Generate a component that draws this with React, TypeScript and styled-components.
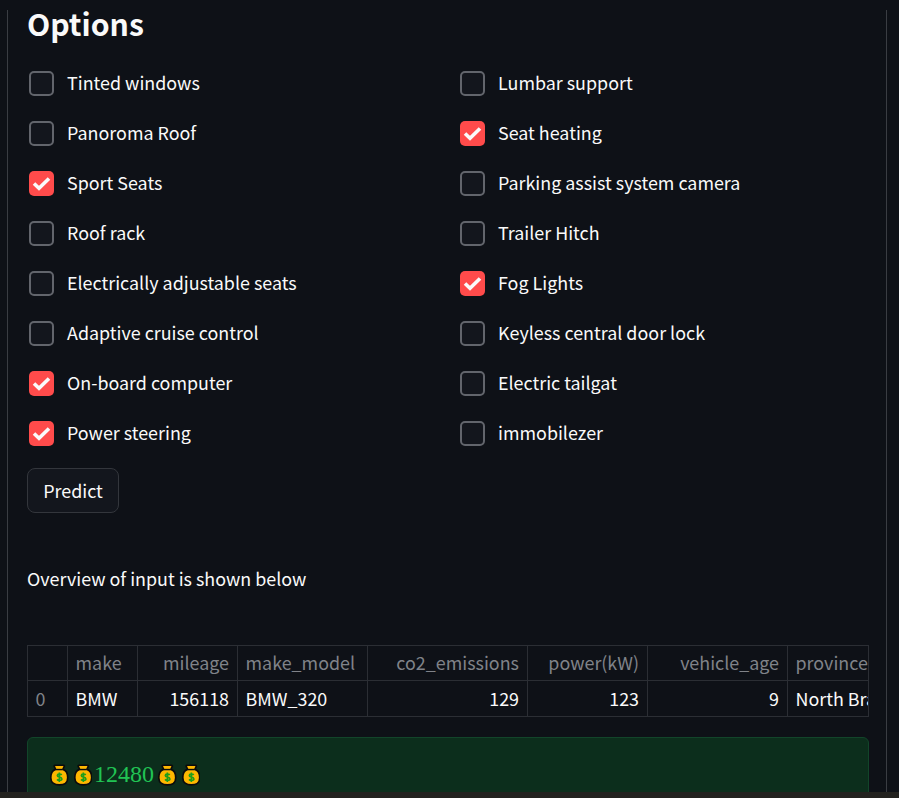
import React from "react";
import styled, { createGlobalStyle } from "styled-components";

const SANS = `"Noto Sans CJK SC", "Noto Sans", sans-serif`;

const Global = createGlobalStyle`
  html, body { margin: 0; padding: 0; background: #0e1117; }
  body { width: 899px; height: 798px; overflow: hidden; font-family: ${SANS}; color: #fafafa; }
`;
const Page = styled.div`
  height: 798px; display: flex; flex-direction: column; background: #0e1117; overflow: hidden;
`;
const Frame = styled.main`
  flex: 1; min-height: 0; margin: 10px 12px 0 7px; padding: 0 17px 0 19px; overflow: hidden;
  border-left: 1px solid #3a3d43; border-right: 1px solid #3a3d43;
`;
const BottomBar = styled.div`height: 6px; background: #23221f; flex: none;`;
const Title = styled.h2`
  margin: 0; font-size: 30.2px; line-height: 26px; font-weight: 700; color: #fafafa; height: 36px;
`;
const OptionGrid = styled.div`
  display: grid; grid-template-columns: 415px 1fr; column-gap: 16px; grid-auto-rows: 50px; margin-top: 12px;
`;
const Option = styled.label`display: flex; align-items: center; height: 50px; padding-left: 2px; gap: 13px;`;
const Box = styled.span<{ $on?: boolean }>`
  width: 25px; height: 25px; box-sizing: border-box; border-radius: 5px; flex: none; display: flex; align-items: center; justify-content: center;
  background: ${p => (p.$on ? "#ff4b4b" : "#13161d")};
  border: ${p => (p.$on ? "none" : "2px solid #62656c")};
`;
const OptionText = styled.span`font-size: 17.9px; line-height: 24px; padding-bottom: 2px; color: #fafafa;`;
const PredictButton = styled.button`
  display: block; margin-top: 10px; width: 92px; height: 45px; box-sizing: border-box; background: #13161d; color: #fafafa;
  border: 1px solid #33363c; border-radius: 8px; font: 17.9px ${SANS}; padding: 0 0 2px;
`;
const Overview = styled.p`margin: 53px 0 0; font-size: 17.9px; line-height: 24px; color: #fafafa;`;
const TableWrap = styled.div`margin-top: 55px; width: 842px; overflow: hidden; border-right: 1px solid #2b2e34; box-sizing: border-box;`;
const Table = styled.table`
  border-collapse: collapse; table-layout: fixed; width: 860px; font-size: 17.9px;
`;
const Head = styled.th<{ $right?: boolean }>`
  height: 35px; padding: 0 8px 2px 7.5px; box-sizing: border-box; font-weight: 400; color: #808389; text-align: ${p => (p.$right ? "right" : "left")};
  border: 1px solid #2b2e34; white-space: nowrap; overflow: hidden;
`;
const Cell = styled.td<{ $right?: boolean; $index?: boolean }>`
  height: 36px; padding: 0 8px 2px 7.5px; box-sizing: border-box; color: ${p => (p.$index ? "#808389" : "#fafafa")}; text-align: ${p => (p.$right ? "right" : "left")};
  border: 1px solid #2b2e34; white-space: nowrap; overflow: hidden;
`;
const Result = styled.div`
  margin-top: 20px; height: 80px; box-sizing: border-box; padding: 21px 22px; background: #0c2e1c; border: 1px solid #12452a; border-radius: 6px;
  display: flex; align-items: flex-start;
`;
const Amount = styled.span`font: 24px/30px "Liberation Serif", serif; color: #21c354; margin: 0 4px 0 2px;`;
const BagIcon = styled.svg`width: 18.5px; height: 22px; margin: 5px 5px 0 0; flex: none; &:nth-of-type(2) { margin-right: 0; } &:last-child { margin-right: 0; }`;

const Bag = () => (
  <BagIcon viewBox="0 0 19 22">
    <path d="M5 1h9c.6 0 .8.6.6 1.100l-1.300 3.100c3.200 1 4.900 4.900 4.900 8.500 0 5-3.600 7.500-8.700 7.500S.8 18.700.8 13.700c0-3.600 1.700-7.500 4.900-8.500L4.400 2.100C4.200 1.600 4.400 1 5 1z" fill="#fdb700" stroke="#0b0b0b" strokeWidth="1.700" strokeLinejoin="round" />
    <path d="M6 5.400h7" stroke="#0b0b0b" strokeWidth="1.500" />
    <path d="M12 10.900c-.7-1-4.400-1.300-4.500.7-.1 2.100 4.700 1.100 4.700 3.400 0 1.900-4 1.700-5 .5M9.600 8.400v9.800" fill="none" stroke="#1f9e1a" strokeWidth="1.700" />
  </BagIcon>
);

const Check = () => (
  <svg width="19" height="15" viewBox="0 0 19 15" fill="none">
    <path d="M2 7.500l5 4.800L17 2.500" stroke="#fafafa" strokeWidth="3.600" />
  </svg>
);

const options: [string, boolean][] = [
  ["Tinted windows", false], ["Lumbar support", false],
  ["Panoroma Roof", false], ["Seat heating", true],
  ["Sport Seats", true], ["Parking assist system camera", false],
  ["Roof rack", false], ["Trailer Hitch", false],
  ["Electrically adjustable seats", false], ["Fog Lights", true],
  ["Adaptive cruise control", false], ["Keyless central door lock", false],
  ["On-board computer", true], ["Electric tailgat", false],
  ["Power steering", true], ["immobilezer", false],
];
const columns: { name: string; value: string; width: number; right?: boolean }[] = [
  { name: "make", value: "BMW", width: 70 },
  { name: "mileage", value: "156118", width: 100, right: true },
  { name: "make_model", value: "BMW_320", width: 130 },
  { name: "co2_emissions", value: "129", width: 160, right: true },
  { name: "power(kW)", value: "123", width: 120, right: true },
  { name: "vehicle_age", value: "9", width: 140, right: true },
  { name: "province", value: "North Brabant", width: 100 },
];

export default function App() {
  return (
    <Page>
      <Global />
      <Frame>
        <Title>Options</Title>
        <OptionGrid>
          {options.map(([label, on]) => (
            <Option key={label}>
              <Box $on={on}>{on && <Check />}</Box>
              <OptionText>{label}</OptionText>
            </Option>
          ))}
        </OptionGrid>
        <PredictButton>Predict</PredictButton>
        <Overview>Overview of input is shown below</Overview>
        <TableWrap>
          <Table>
            <colgroup>
              <col style={{ width: 40 }} />
              {columns.map(c => <col key={c.name} style={{ width: c.width }} />)}
            </colgroup>
            <thead>
              <tr>
                <Head />
                {columns.map(c => <Head key={c.name} $right={c.right}>{c.name}</Head>)}
              </tr>
            </thead>
            <tbody>
              <tr>
                <Cell $index>0</Cell>
                {columns.map(c => <Cell key={c.name} $right={c.right}>{c.value}</Cell>)}
              </tr>
            </tbody>
          </Table>
        </TableWrap>
        <Result>
          <Bag /><Bag /><Amount>12480</Amount><Bag /><Bag />
        </Result>
      </Frame>
      <BottomBar />
    </Page>
  );
}
